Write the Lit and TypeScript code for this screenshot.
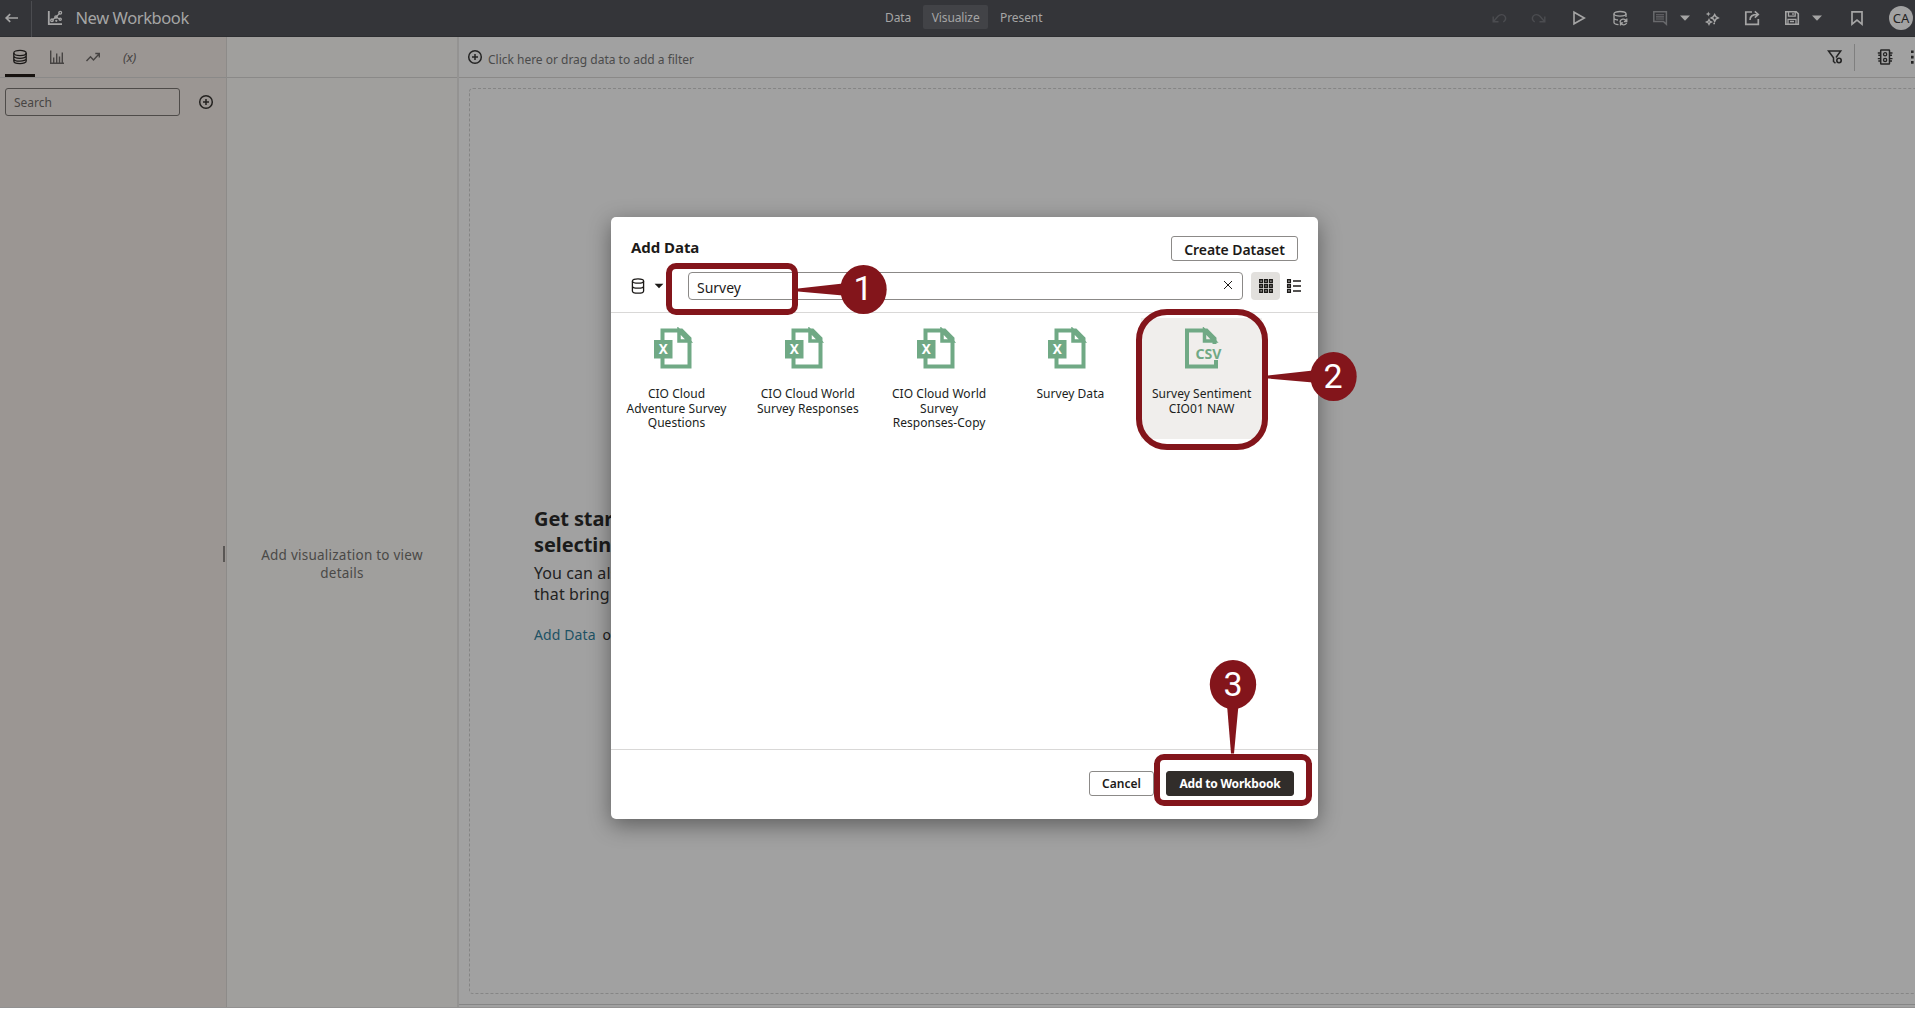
import { LitElement, html, svg, css, TemplateResult } from "lit";
import { customElement, property } from "lit/decorators.js";
import { classMap } from "lit/directives/class-map.js";

const glyphs: Record<string, TemplateResult> = {
  back: svg`<path d="M14 8H2M6.2 4.2 2.2 8l4 3.8" stroke-width="1.7"/>`,
  logo: svg`<path d="M1.8 1v13.2H15" stroke-width="1.8"/><path d="M5 10.300 9 7l4-4M9 7l4 2.300" stroke-width="1.200"/><g stroke-width="1.300"><circle cx="5" cy="10.300" r="1.300"/><circle cx="9" cy="7" r="1.200"/><circle cx="13.200" cy="2.800" r="1.400"/><circle cx="13.200" cy="9.300" r="1.100"/><circle cx="9.300" cy="10.800" r=".5"/></g>`,
  undo: svg`<path d="M2.200 6.500v5.300h5.300M2.500 11.500 7 6.300c2-2.300 5.300-2.200 6.800-.2 1.200 1.700.9 4.200-1.500 5.900" stroke-width="1.400"/>`,
  redo: svg`<path d="M13.800 6.500v5.300H8.500M13.500 11.500 9 6.300C7 4 3.700 4.100 2.200 6.100 1 7.800 1.300 10.300 3.700 12" stroke-width="1.400"/>`,
  play: svg`<path d="M3 2.200v11.600L13.300 8z" stroke-width="1.600"/>`,
  dbRefresh: svg`<ellipse cx="8" cy="3.800" rx="6" ry="2.300"/><path d="M2 3.800v8.700c0 1 1.800 1.900 4.500 2.200M14 3.800V7M2 8c0 1 1.800 1.800 4 2"/><path d="M8 12.200c.2-3.400 5-4.300 6.300-1M14.800 8.500v3h-2.900M14.700 13c-1.200 2.300-4.400 2.400-5.700.3M8.500 15.500v-2.600h2.600" stroke-width="1.300"/>`,
  comment: svg`<path d="M1.800 1.800h12.600v12.500l-3-2.800H1.800z" stroke-width="1.500"/><path d="M4 4.800h8M4 6.900h8M4 9h8" stroke-width="1.100"/>`,
  sparkle: svg`<path d="m10.700 4.500 1.200 2.200L14.200 7.900l-2.300 1.200-1.200 2.300-1.200-2.300-2.300-1.200 2.300-1.200z" stroke-width="1.500"/><path d="m5 9.500.8 1.700 1.700.8-1.700.8L5 14.500l-.8-1.700-1.700-.8 1.700-.8z" stroke-width="1.300"/><path d="m4.300 1.500.7 1.800 1.800.7L5 4.700 4.300 6.500l-.7-1.800L1.800 4l1.800-.7z" fill="currentColor" stroke="none"/><path d="M9.300 13.500H11" stroke-width="1.500"/>`,
  share: svg`<path d="M8 2H1.800v12.400h12.500V9" stroke-width="1.700"/><path d="M6 10c0-4 2.500-5.500 7.500-5.500M10.800 1.300l3.500 3.200-3.500 3.200" stroke-width="1.600"/>`,
  save: svg`<path d="M1.800 1.800h10.400l2.100 2.100v10.400H1.800z" stroke-width="1.600"/><path d="M4.500 2v4.200h6.700V2M4 14V9.300h8V14M9 3v2M6 11.500h4" stroke-width="1.300"/>`,
  bookmark: svg`<path d="M3 1.800h10v12.400l-5-4-5 4z" stroke-width="1.700"/>`,
  caret: svg`<path d="M3 5.500h10L8 10.700z" fill="currentColor" stroke="none"/>`,
  db: svg`<ellipse cx="8" cy="4" rx="6.200" ry="2.600"/><path d="M1.800 4v8c0 1.500 2.800 2.600 6.200 2.600s6.200-1.100 6.200-2.600V4M1.800 6.800c0 1.400 2.800 2.500 6.200 2.500s6.200-1.100 6.200-2.500M1.800 9.700c0 1.400 2.800 2.500 6.200 2.500s6.200-1.100 6.200-2.500"/>`,
  dbThin: svg`<ellipse cx="8" cy="3" rx="5.600" ry="2.200"/><path d="M2.400 3v10c0 1.200 2.500 2.200 5.600 2.200s5.600-1 5.600-2.200V3M2.400 8c0 1.200 2.500 2.200 5.600 2.200s5.600-1 5.600-2.200"/>`,
  bars: svg`<path d="M1.700 1.500v12.700H15M4.700 14V8.500M7.700 14V4.500M10.500 14V7.500M13.300 14V3.500" stroke-width="1.400"/>`,
  trend: svg`<path d="m1.500 12 4-4.300 3 3.300 5.500-6M10.300 4.500h4v4" stroke-width="1.400"/>`,
  plus: svg`<circle cx="8" cy="8" r="6.300" stroke-width="1.500"/><path d="M8 5v6M5 8h6" stroke-width="1.500"/>`,
  filter: svg`<path d="M9 8.500 13.700 2H1.500l5 6.800v3.700l2 1.700" stroke-width="1.500"/><circle cx="12" cy="11.500" r="2.200" stroke-width="1.600"/>`,
  traffic: svg`<rect x="3.700" y="1" width="8.800" height="14" rx=".5" stroke-width="1.500"/><circle cx="8.100" cy="5.300" r="1.600"/><circle cx="8.100" cy="10.900" r="1.600"/><path d="M.8 4h3M1.300 6.300h2.500M.8 9.600h3M1.300 12h2.500M12.500 4h3M12.500 6.300H15M12.500 9.600h3M12.500 12H15" stroke-width="1.400"/>`,
  dots: svg`<path d="M7 1.500h2.600v2.600H7zM7 6.800h2.600v2.600H7zM7 12.100h2.600v2.600H7z" fill="currentColor" stroke="none"/>`,
  close: svg`<path d="m4 4 8 8M12 4l-8 8" stroke-width="1"/>`,
  grid: svg`<g stroke-width="1.500"><path d="M1.800 1.800h2.600v2.600H1.800zM6.700 1.800h2.600v2.600H6.700zM11.600 1.800h2.600v2.600h-2.600zM1.800 6.700h2.600v2.600H1.800zM6.700 6.700h2.600v2.600H6.700zM11.600 6.700h2.600v2.600h-2.600zM1.800 11.600h2.600v2.600H1.800zM6.700 11.600h2.600v2.600H6.700zM11.600 11.600h2.600v2.600h-2.600z"/></g>`,
  list: svg`<path d="M1.700 1.800h2.600v2.600H1.700zM1.700 6.700h2.600v2.600H1.700zM1.700 11.600h2.600v2.600H1.700zM7 3.100h8M7 8h8M7 12.900h8" stroke-width="1.500"/>`,
};

@customElement("ui-icon")
class UiIcon extends LitElement {
  @property() name = "";
  static styles = css`
    :host { display: block; flex: none; width: 16px; height: 16px; }
    svg { display: block; width: 100%; height: 100%; overflow: visible; }
  `;
  render() {
    return html`<svg viewBox="0 0 16 16" fill="none" stroke="currentColor" stroke-width="1.3">${glyphs[this.name]}</svg>`;
  }
}

@customElement("dataset-tile")
class DatasetTile extends LitElement {
  @property() kind = "xls";
  @property({ attribute: false }) lines: string[] = [];
  @property({ type: Boolean }) selected = false;
  static styles = css`
    :host { display: block; width: 121px; height: 121px; }
    .tile { height: 121px; display: flex; flex-direction: column; align-items: center; padding-top: 9px; box-sizing: border-box; color: #201e1c; }
    .selected { background: #f0eeec; }
    svg { display: block; width: 48px; height: 44px; margin-right: 5px; flex: none; }
    .label { margin-top: 16px; text-align: center; font-size: 12px; line-height: 14.5px; letter-spacing: 0.04px; white-space: nowrap; }
    .mark { font: 700 13.5px "Noto Sans", sans-serif; }
    .csv { font: 700 14px "Noto Sans", sans-serif; }
  `;
  render() {
    const xls = svg`
      <path d="M12.500 13V3.500h19l8 8V39.500h-27V30" fill="none" stroke="#70a985" stroke-width="4"/>
      <path d="M29 3.500v10.500h10z" fill="#fff" stroke="#70a985" stroke-width="3.500"/>
      <rect x="4" y="13" width="18.500" height="18.500" fill="#70a985"/>
      <text class="mark" x="13.300" y="27" text-anchor="middle" fill="#fff">X</text>`;
    const csv = svg`<g transform="translate(4 0)">
      <path d="M37 33v6.500H8V3.500h19.500l8 8V17" fill="none" stroke="#70a985" stroke-width="4"/>
      <path d="M25.500 3.500v10.500h10z" fill="#f0eeec" stroke="#70a985" stroke-width="3.500"/>
      <text class="csv" x="16.500" y="31.500" textLength="26" lengthAdjust="spacingAndGlyphs" fill="#70a985">CSV</text></g>`;
    return html`<div class=${classMap({ tile: true, selected: this.selected })}>
      <svg viewBox="0 0 48 44">${this.kind === "csv" ? csv : xls}</svg>
      <div class="label">${this.lines.map((l) => html`<div>${l}</div>`)}</div>
    </div>`;
  }
}

@customElement("app-root")
class AppRoot extends LitElement {
  static styles = css`
    :host { display: block; font-family: "Noto Sans", "Open Sans", sans-serif; }
    * { box-sizing: border-box; }
    .app { position: relative; height: 1008px; width: 100%; overflow: hidden; display: flex; flex-direction: column; background: #a1a1a1; white-space: nowrap; border-bottom: 1px solid #929191; }
    .header { height: 37px; flex: none; background: #343539; color: #a5a5a5; display: grid; grid-template-columns: 877px 1fr 437px; align-items: stretch; padding-bottom: 8px; border-bottom: 1px solid #2d2e31; }
    .brand { display: flex; align-items: center; }
    .back { width: 32px; height: 37px; margin-bottom: -8px; border-right: 1px solid #4b4c50; padding: 9px 0 0 4px; }
    .logo { margin: 5px 0 0 15px; }
    .title { margin-left: 12.500px; margin-top: 6px; font-size: 16.500px; line-height: 24px; letter-spacing: -0.42px; }
    .modes { display: flex; padding-top: 5px; font-size: 12px; line-height: 26px; letter-spacing: -0.1px; }
    .mode { padding: 0 8px; height: 24px; border-radius: 2px; }
    .mode.on { background: #424347; margin: 0 4px; padding: 0 8.500px; }
    .tools { display: flex; align-items: center; padding: 5px 0 0 13px; }
    .tools ui-icon { margin-right: 24.200px; }
    .tools .off { color: #4b4c50; }
    .tools .dim { color: #696a6d; margin-right: 9px; }
    .tools .near { margin-right: 8.500px; }
    .tools .tight { margin-right: 11px; }
    .avatar { width: 24px; height: 24px; flex: none; border-radius: 50%; background: #a2a2a2; color: #222; font-size: 13px; line-height: 25px; text-align: center; }
    .work { flex: 1; min-height: 0; display: grid; grid-template-columns: 227px 232px 1fr; }
    .side { background: #9b9693; border-right: 1px solid #8d8b89; position: relative; display: flex; flex-direction: column; }
    .bar { height: 41px; flex: none; border-bottom: 1px solid #8a8988; display: flex; align-items: center; }
    .tabs { color: #474443; padding-left: 5px; }
    .tab { width: 30px; margin-right: 6.500px; height: 100%; display: flex; align-items: center; justify-content: center; padding-top: 3px; border-bottom: 3px solid transparent; border-radius: 3px 3px 0 0; }
    .tab.on { color: #1b1918; border-color: #17120f; }
    .fx { font-style: italic; font-size: 13px; line-height: 16px; letter-spacing: -0.2px; }
    .find { display: flex; align-items: center; padding: 10px 0 0 5px; color: #242220; }
    .input { width: 175px; height: 28px; border: 1px solid #4e4b49; border-radius: 3px; padding-left: 8px; font-size: 12px; line-height: 28px; color: #484543; }
    .find ui-icon { margin-left: 18px; }
    .grip { position: absolute; right: 1px; top: 509px; width: 2px; height: 16px; background: #5a5755; }
    .detail { background: #a09f9d; border-right: 2px solid #949392; display: flex; flex-direction: column; }
    .hint { flex: 1; display: flex; flex-direction: column; align-items: center; padding-top: 468px; font-size: 13.500px; line-height: 18.300px; letter-spacing: 0.24px; color: #4a4947; }
    .main { min-width: 0; display: flex; flex-direction: column; }
    .filters { color: #242424; padding-left: 8px; }
    .filters .txt { font-size: 12px; margin: 5px auto 0 5px; color: #4b4b4b; letter-spacing: -0.01px; }
    .rule { width: 1px; height: 27px; background: #7f7f7f; margin: 0 22px 0 11px; }
    .filters .dots { margin: 0 -4.500px 0 11px; }
    .canvas { flex: 1; margin: 10px -10px 10px 10px; border: 1px dashed #858585; border-radius: 4px; padding: 417px 0 0 64px; color: #1b1b1b; }
    .h { font-size: 20px; font-weight: 700; line-height: 26px; letter-spacing: -0.1px; }
    .p { font-size: 16px; line-height: 21px; margin-top: 5px; letter-spacing: 0.08px; color: #222; }
    .l { font-size: 14px; line-height: 20px; margin-top: 20px; letter-spacing: 0.1px; }
    .l b { font-weight: 400; color: #1e5264; margin-right: 7px; }
    .foot { height: 3px; flex: none; border-top: 1px solid #858585; }
    .dialog { position: absolute; left: 611px; top: 217px; width: 707px; height: 602px; background: #fff; border-radius: 5px; box-shadow: 0 6px 22px rgba(0, 0, 0, .42); display: flex; flex-direction: column; color: #1c1a18; }
    .top { display: flex; justify-content: space-between; height: 55px; padding: 19px 20px 0; flex: none; }
    .cap { font-size: 15px; line-height: 22px; font-weight: 700; letter-spacing: -0.05px; }
    .btn { height: 25px; border: 1px solid #8c8a88; border-radius: 3px; text-align: center; font-weight: 600; }
    .create { width: 127px; font-size: 14px; line-height: 25px; letter-spacing: -0.08px; }
    .query { display: flex; align-items: center; height: 41px; padding: 0 15px 12px 19px; border-bottom: 1px solid #d9d8d7; flex: none; }
    .query .drop { width: 14px; margin-left: 6px; }
    .field { width: 555px; height: 28px; margin-left: 22px; border: 1px solid #8b8987; border-radius: 4px; display: flex; align-items: center; justify-content: space-between; padding: 3px 6px 0 8px; font-size: 14px; }
    .field ui-icon { width: 16px; margin-top: -6px; }
    .view { width: 29px; height: 28px; margin: 0 6px 0 8px; background: #e2e0dd; border-radius: 4px; display: flex; align-items: center; justify-content: center; }
    .tiles { flex: 1; display: flex; gap: 10.300px; padding: 5px 0 0 5px; }
    .actions { height: 70px; flex: none; border-top: 1px solid #d9d8d7; display: flex; padding: 21px 24px 0 0; justify-content: flex-end; gap: 12px; font-size: 12px; line-height: 24px; }
    .cancel { width: 65px; }
    .add { width: 128px; background: #312d2a; border-color: #312d2a; color: #fff; font-weight: 700; letter-spacing: -0.2px; }
    .marks { position: absolute; left: 0; top: 0; width: 1915px; height: 1008px; }
    .num { font: 400 34px Roboto, sans-serif; }
  `;

  private tiles = [
    { kind: "xls", lines: ["CIO Cloud", "Adventure Survey", "Questions"] },
    { kind: "xls", lines: ["CIO Cloud World", "Survey Responses"] },
    { kind: "xls", lines: ["CIO Cloud World", "Survey", "Responses-Copy"] },
    { kind: "xls", lines: ["Survey Data"] },
    { kind: "csv", lines: ["Survey Sentiment", "CIO01 NAW"], selected: true },
  ];

  render() {
    return html`<div class="app">
      <div class="header">
        <div class="brand">
          <div class="back"><ui-icon name="back"></ui-icon></div>
          <ui-icon class="logo" name="logo"></ui-icon>
          <div class="title">New Workbook</div>
        </div>
        <div class="modes">
          <div class="mode">Data</div><div class="mode on">Visualize</div><div class="mode">Present</div>
        </div>
        <div class="tools">
          <ui-icon class="off" name="undo"></ui-icon>
          <ui-icon class="off" name="redo"></ui-icon>
          <ui-icon name="play"></ui-icon>
          <ui-icon name="dbRefresh"></ui-icon>
          <ui-icon class="dim" name="comment"></ui-icon>
          <ui-icon class="tight" name="caret"></ui-icon>
          <ui-icon name="sparkle"></ui-icon>
          <ui-icon name="share"></ui-icon>
          <ui-icon class="near" name="save"></ui-icon>
          <ui-icon name="caret"></ui-icon>
          <ui-icon name="bookmark"></ui-icon>
          <div class="avatar">CA</div>
        </div>
      </div>
      <div class="work">
        <div class="side">
          <div class="bar tabs">
            <div class="tab on"><ui-icon name="db"></ui-icon></div>
            <div class="tab"><ui-icon name="bars"></ui-icon></div>
            <div class="tab"><ui-icon name="trend"></ui-icon></div>
            <div class="tab"><span class="fx">(x)</span></div>
          </div>
          <div class="find"><div class="input">Search</div><ui-icon name="plus"></ui-icon></div>
          <div class="grip"></div>
        </div>
        <div class="detail">
          <div class="bar"></div>
          <div class="hint"><span>Add visualization to view</span><span>details</span></div>
        </div>
        <div class="main">
          <div class="bar filters">
            <ui-icon name="plus"></ui-icon>
            <span class="txt">Click here or drag data to add a filter</span>
            <ui-icon name="filter"></ui-icon>
            <div class="rule"></div>
            <ui-icon name="traffic"></ui-icon>
            <ui-icon class="dots" name="dots"></ui-icon>
          </div>
          <div class="canvas">
            <div class="h"><div>Get started by</div><div>selecting</div></div>
            <div class="p"><div>You can also</div><div>that bring</div></div>
            <div class="l"><b>Add Data</b>or</div>
          </div>
          <div class="foot"></div>
        </div>
      </div>
      <div class="dialog">
        <div class="top"><div class="cap">Add Data</div><div class="btn create">Create Dataset</div></div>
        <div class="query">
          <ui-icon name="dbThin"></ui-icon><ui-icon class="drop" name="caret"></ui-icon>
          <div class="field"><span>Survey</span><ui-icon name="close"></ui-icon></div>
          <div class="view"><ui-icon name="grid"></ui-icon></div>
          <ui-icon name="list"></ui-icon>
        </div>
        <div class="tiles">
          ${this.tiles.map((t) => html`<dataset-tile .kind=${t.kind} .lines=${t.lines} .selected=${!!t.selected}></dataset-tile>`)}
        </div>
        <div class="actions"><div class="btn cancel">Cancel</div><div class="btn add">Add to Workbook</div></div>
      </div>
      <svg class="marks" viewBox="0 0 1915 1008">
        <g fill="none" stroke="#83151b" stroke-width="6">
          <rect x="669" y="266" width="126" height="46" rx="7"/>
          <rect x="1139" y="312" width="126" height="135" rx="28"/>
          <rect x="1157" y="757" width="152" height="46" rx="7"/>
        </g>
        <g fill="#83151b">
          <path d="M798 288.500 843 283.500V295.500L798 291.500z"/>
          <path d="M1268 375.500 1313 370.500V382.500L1268 378.500z"/>
          <path d="M1227 705H1238.500L1234 753.500H1231z"/>
          <ellipse cx="863.500" cy="289.500" rx="23.200" ry="24.500"/>
          <ellipse cx="1333.500" cy="376.500" rx="23.200" ry="24.500"/>
          <ellipse cx="1233" cy="684.500" rx="23.200" ry="24.500"/>
        </g>
        <g class="num" fill="#fff" text-anchor="middle">
          <text x="863" y="300">1</text><text x="1333" y="388">2</text><text x="1233" y="696">3</text>
        </g>
      </svg>
    </div>`;
  }
}
